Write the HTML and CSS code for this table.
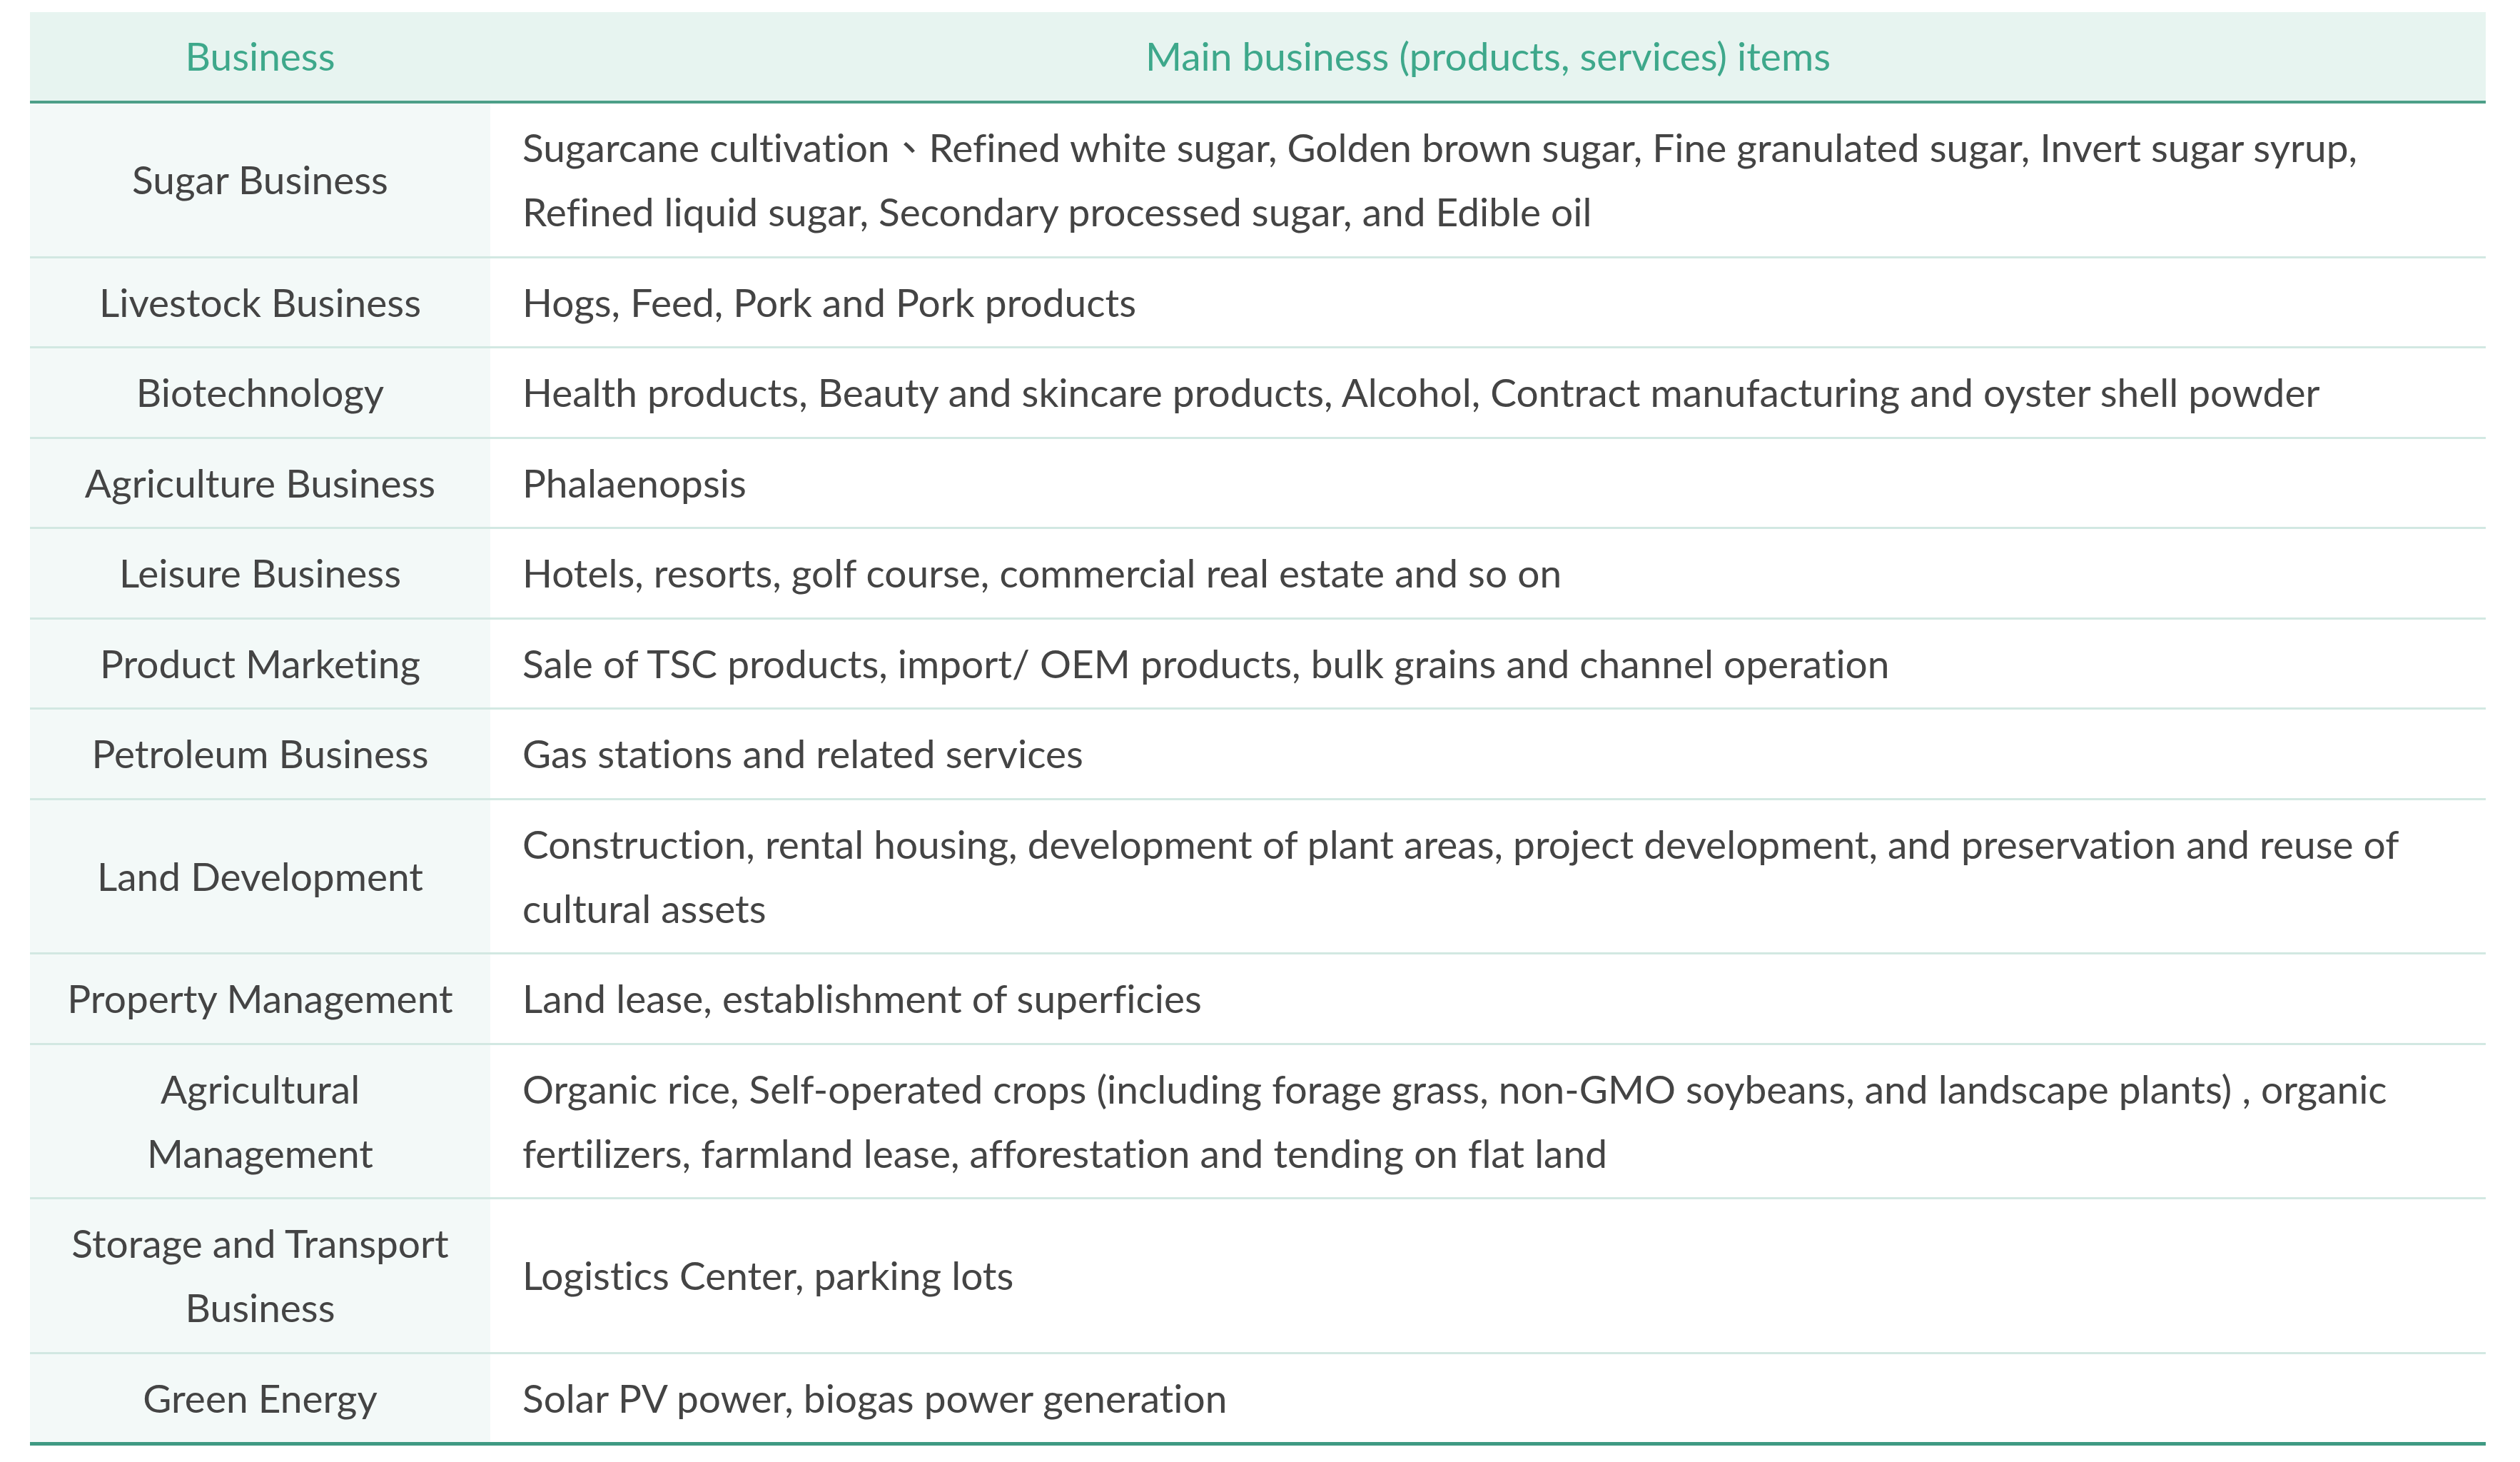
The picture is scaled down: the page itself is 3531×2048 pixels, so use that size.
FILE: index.html
```html
<!DOCTYPE html>
<html lang="en">
<head>
<meta charset="utf-8">
<title>Main business items</title>
<link rel="stylesheet" href="styles.css">
</head>
<body>
<div class="wrap">
<table class="biz">
<colgroup><col class="c1"><col class="c2"></colgroup>
<thead>
<tr><th>Business</th><th>Main business (products, services) items</th></tr>
</thead>
<tbody>
<tr><td class="name">Sugar Business</td><td>Sugarcane cultivation、Refined white sugar, Golden brown sugar, Fine granulated sugar, Invert sugar syrup, Refined liquid sugar, Secondary processed sugar, and Edible oil</td></tr>
<tr><td class="name">Livestock Business</td><td>Hogs, Feed, Pork and Pork products</td></tr>
<tr><td class="name">Biotechnology</td><td>Health products, Beauty and skincare products, Alcohol, Contract manufacturing and oyster shell powder</td></tr>
<tr><td class="name">Agriculture Business</td><td>Phalaenopsis</td></tr>
<tr><td class="name">Leisure Business</td><td>Hotels, resorts, golf course, commercial real estate and so on</td></tr>
<tr><td class="name">Product Marketing</td><td>Sale of TSC products, import/ OEM products, bulk grains and channel operation</td></tr>
<tr><td class="name">Petroleum Business</td><td>Gas stations and related services</td></tr>
<tr><td class="name">Land Development</td><td>Construction, rental housing, development of plant areas, project development, and preservation and reuse of cultural assets</td></tr>
<tr><td class="name">Property Management</td><td>Land lease, establishment of superficies</td></tr>
<tr><td class="name">Agricultural Management</td><td>Organic rice, Self-operated crops (including forage grass, non-GMO soybeans, and landscape plants) , organic fertilizers, farmland lease, afforestation and tending on flat land</td></tr>
<tr><td class="name">Storage and Transport Business</td><td>Logistics Center, parking lots</td></tr>
<tr><td class="name">Green Energy</td><td>Solar PV power, biogas power generation</td></tr>
</tbody>
</table>
</div>
</body>
</html>
```
FILE: styles.css
```css
html, body {
  margin: 0;
  padding: 0;
  background: #ffffff;
}
.wrap {
  padding: 17px 0 0 42px;
}
.biz {
  width: 3441px;
  border-collapse: collapse;
  table-layout: fixed;
  font-family: "Lato", "Noto Sans CJK TC", sans-serif;
  font-size: 55px;
  line-height: 90px;
  color: #444444;
  font-variant-ligatures: none;
}
.c1 { width: 645px; }
.biz th {
  background: #e7f4f0;
  color: #3ea88b;
  font-weight: 400;
  text-align: center;
  padding: 16px 45px 18px;
  border-bottom: 4px solid #4c9f88;
}
.biz td {
  padding: 16px 45px 17.5px;
  border-bottom: 3px solid #d2e8e2;
  text-align: left;
  vertical-align: middle;
  background: #ffffff;
}
.biz td.name {
  text-align: center;
  background: #f3f9f8;
}
.biz tbody tr:last-child td {
  border-bottom: 5px solid #3f9a83;
}
```
